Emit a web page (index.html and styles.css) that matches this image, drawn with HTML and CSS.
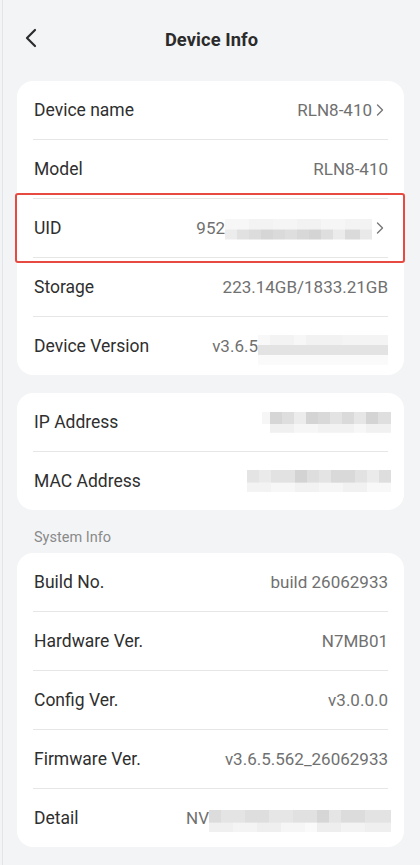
FILE: index.html
```html
<!DOCTYPE html>
<html lang="en">
<head>
<meta charset="utf-8">
<meta name="viewport" content="width=device-width, initial-scale=1">
<title>Device Info</title>
<link rel="stylesheet" href="styles.css">
</head>
<body>
<div class="page">
  <header class="topbar">
    <button class="back" aria-label="Back">
      <svg width="14" height="20" viewBox="0 0 14 20"><path d="M11 2 L3 10 L11 18" fill="none" stroke="#2b2b2b" stroke-width="2.2" stroke-linecap="round" stroke-linejoin="round"/></svg>
    </button>
    <h1 class="title">Device Info</h1>
  </header>

  <section class="card">
    <div class="row">
      <span class="label">Device name</span>
      <span class="value">RLN8-410<svg class="chev" width="10" height="14" viewBox="0 0 10 14"><path d="M2.5 2 L7.5 7 L2.5 12" fill="none" stroke="#777" stroke-width="1.4" stroke-linecap="round" stroke-linejoin="round"/></svg></span>
    </div>
    <div class="row">
      <span class="label">Model</span>
      <span class="value">RLN8-410</span>
    </div>
    <div class="row highlighted">
      <span class="label">UID</span>
      <span class="value">952<span class="mosaic m-uid"></span><svg class="chev" width="10" height="14" viewBox="0 0 10 14"><path d="M2.5 2 L7.5 7 L2.5 12" fill="none" stroke="#777" stroke-width="1.4" stroke-linecap="round" stroke-linejoin="round"/></svg></span>
      <span class="focus-box"></span>
    </div>
    <div class="row">
      <span class="label">Storage</span>
      <span class="value">223.14GB/1833.21GB</span>
    </div>
    <div class="row">
      <span class="label">Device Version</span>
      <span class="value">v3.6.5<span class="mosaic m-ver"></span></span>
    </div>
  </section>

  <section class="card">
    <div class="row">
      <span class="label">IP Address</span>
      <span class="value"><span class="mosaic m-ip"></span></span>
    </div>
    <div class="row">
      <span class="label">MAC Address</span>
      <span class="value"><span class="mosaic m-mac"></span></span>
    </div>
  </section>

  <h2 class="section-title">System Info</h2>

  <section class="card">
    <div class="row">
      <span class="label">Build No.</span>
      <span class="value">build 26062933</span>
    </div>
    <div class="row">
      <span class="label">Hardware Ver.</span>
      <span class="value">N7MB01</span>
    </div>
    <div class="row">
      <span class="label">Config Ver.</span>
      <span class="value">v3.0.0.0</span>
    </div>
    <div class="row">
      <span class="label">Firmware Ver.</span>
      <span class="value">v3.6.5.562_26062933</span>
    </div>
    <div class="row">
      <span class="label">Detail</span>
      <span class="value">NV<span class="mosaic m-detail"></span></span>
    </div>
  </section>
</div>
</body>
</html>
```

FILE: styles.css
```css
* { box-sizing: border-box; }

html, body {
  margin: 0;
  padding: 0;
  background: #f3f4f6;
}

body {
  font-family: Roboto, "Noto Sans", "Liberation Sans", sans-serif;
  color: #2f2f2f;
  width: 420px;
  height: 865px;
  overflow: hidden;
}

.page {
  margin-left: 2px;
  border-left: 1px solid #e4e5e8;
  min-height: 865px;
  padding-right: 16px;
  padding-left: 14px;
}

.topbar {
  height: 78px;
  display: flex;
  align-items: center;
  justify-content: center;
  position: relative;
  margin: 0 -16px 3px -14px;
}

.back {
  position: absolute;
  left: 18px;
  top: 27px;
  width: 20px;
  height: 22px;
  padding: 0;
  border: 0;
  background: transparent;
  display: flex;
  align-items: center;
  justify-content: center;
}

.title {
  margin: 0;
  font-size: 18.3px;
  font-weight: 700;
  color: #2b2b2b;
  letter-spacing: 0.1px;
}

.card {
  background: #ffffff;
  border-radius: 16px;
  padding: 0 16px;
  margin-bottom: 18px;
}

.row {
  height: 58px;
  display: flex;
  align-items: center;
  justify-content: space-between;
  position: relative;
}

.row + .row {
  height: 59px;
  border-top: 1px solid #e6e6e6;
}

.label {
  font-size: 17.5px;
  color: #2f2f2f;
  padding-left: 1px;
}

.value {
  font-size: 17px;
  color: #707070;
  display: flex;
  align-items: center;
  white-space: nowrap;
}

.chev {
  margin-left: 3px;
  margin-right: 3px;
}

.focus-box {
  position: absolute;
  left: -18px;
  right: -17px;
  top: -6px;
  bottom: -6px;
  border: 2px solid #e64a40;
  border-radius: 3px;
  pointer-events: none;
}

.section-title {
  margin: 0 0 5px 17px;
  height: 20px;
  line-height: 20px;
  font-size: 14.5px;
  font-weight: 400;
  color: #8a8a8a;
}

.mosaic {
  display: inline-block;
  height: 21px;
  background-repeat: no-repeat;
  background-size: 100% 50%, 100% 50%;
  background-position: top left, bottom left;
}

.m-uid {
  width: 147px;
  margin-top: 2px;
  background-image:
    linear-gradient(90deg, #f7f7f7 0 24px, #f3f3f3 24px 48px, #f5f5f5 48px 72px, #f2f2f2 72px 96px, #f6f6f6 96px 120px, #f3f3f3 120px 147px),
    linear-gradient(90deg, #ececec 0 12px, #e1e1e1 12px 24px, #dcdcdc 24px 36px, #d6d6d6 36px 48px, #dadada 48px 60px, #dedede 60px 72px, #d8d8d8 72px 84px, #d4d4d4 84px 96px, #dedede 96px 108px, #ebebeb 108px 120px, #dadada 120px 135px, #e9e9e9 135px 147px);
}

.m-ver {
  width: 130px;
  height: 30px;
  margin-top: 8px;
  background-size: 100% 34%, 100% 66%;
  background-image:
    linear-gradient(90deg, #f8f8f8 0 12px, #f3f3f3 12px 36px, #f7f7f7 36px 48px, #f2f2f2 48px 84px, #f4f4f4 84px 130px),
    linear-gradient(to bottom, #e3e3e3 0 50%, #fafafa 50% 100%),
    linear-gradient(90deg, #e6e6e6 0 12px, #d9d9d9 12px 24px, #e2e2e2 24px 36px, #ececec 36px 48px, #dddddd 48px 60px, #e0e0e0 60px 72px, #d9d9d9 72px 84px, #dfdfdf 84px 96px, #dadada 96px 108px, #e3e3e3 108px 130px);
  background-position: top left, bottom left, center left;
}

.m-ip {
  width: 129px;
  margin-right: -3px;
  background-size: 100% 58%, 100% 42%;
  background-image:
    linear-gradient(90deg, #f6f6f6 0 8px, #d6d6d6 8px 20px, #dedede 20px 32px, #ececec 32px 44px, #d4d4d4 44px 56px, #d9d9d9 56px 68px, #e3e3e3 68px 80px, #dadada 80px 92px, #e6e6e6 92px 104px, #d4d4d4 104px 116px, #dfdfdf 116px 129px),
    linear-gradient(90deg, #ffffff 0 8px, #f0f0f0 8px 32px, #f6f6f6 32px 56px, #f2f2f2 56px 92px, #f7f7f7 92px 104px, #f1f1f1 104px 129px);
}

.m-mac {
  width: 144px;
  height: 22px;
  margin-right: -3px;
  background-size: 100% 58%, 100% 42%;
  background-image:
    linear-gradient(90deg, #e4e4e4 0 12px, #eaeaea 12px 24px, #e2e2e2 24px 48px, #d3d3d3 48px 60px, #dedede 60px 72px, #e4e4e4 72px 84px, #d9d9d9 84px 108px, #e2e2e2 108px 120px, #ebebeb 120px 132px, #dedede 132px 144px),
    linear-gradient(90deg, #f3f3f3 0 24px, #f7f7f7 24px 48px, #f2f2f2 48px 72px, #f6f6f6 72px 96px, #f1f1f1 96px 120px, #f8f8f8 120px 144px);
}

.m-detail {
  width: 182px;
  height: 23px;
  margin-right: -3px;
  margin-top: 6px;
  background-size: 100% 55%, 100% 45%;
  background-image:
    linear-gradient(90deg, #dcdcdc 0 12px, #e4e4e4 12px 36px, #dedede 36px 60px, #e6e6e6 60px 84px, #e1e1e1 84px 108px, #d6d6d6 108px 120px, #e5e5e5 120px 132px, #dcdcdc 132px 156px, #e3e3e3 156px 182px),
    linear-gradient(90deg, #f0f0f0 0 24px, #f4f4f4 24px 48px, #efefef 48px 72px, #f6f6f6 72px 96px, #fafafa 96px 108px, #eeeeee 108px 132px, #f3f3f3 132px 156px, #efefef 156px 182px);
}
```
